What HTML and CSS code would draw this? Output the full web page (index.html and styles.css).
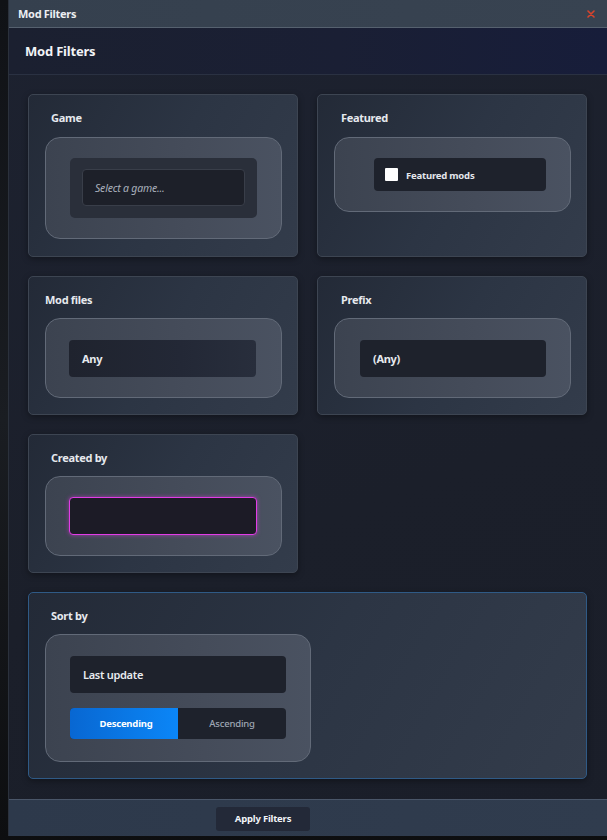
FILE: index.html
```html
<!DOCTYPE html>
<html>
<head>
<meta charset="utf-8">
<link rel="stylesheet" href="styles.css">
</head>
<body>
<div class="window">
  <div class="titlebar">
    <span class="title">Mod Filters</span>
    <svg class="close" width="8" height="8" viewBox="0 0 8 8"><path d="M1 1L7 7M7 1L1 7" stroke="#d8432c" stroke-width="1.6" stroke-linecap="round"/></svg>
  </div>
  <div class="header">Mod Filters</div>
  <div class="content">
    <div class="card card-top">
      <div class="label">Game</div>
      <div class="panel panel-game">
        <div class="wrap">
          <div class="input placeholder">Select a game...</div>
        </div>
      </div>
    </div>
    <div class="card card-top">
      <div class="label label-right">Featured</div>
      <div class="panel panel-featured">
        <div class="check-row">
          <span class="checkbox"></span>
          <span class="check-text">Featured mods</span>
        </div>
      </div>
    </div>
    <div class="card">
      <div class="label label-flush">Mod files</div>
      <div class="panel panel-select">
        <div class="select select-grad">Any</div>
      </div>
    </div>
    <div class="card">
      <div class="label label-right">Prefix</div>
      <div class="panel panel-prefix">
        <div class="select">(Any)</div>
      </div>
    </div>
    <div class="card">
      <div class="label">Created by</div>
      <div class="panel panel-created">
        <div class="text-input"></div>
      </div>
    </div>
    <div class="empty"></div>
    <div class="card card-sort">
      <div class="label">Sort by</div>
      <div class="panel panel-sort">
        <div class="select">Last update</div>
        <div class="toggle">
          <span class="toggle-btn active">Descending</span>
          <span class="toggle-btn">Ascending</span>
        </div>
      </div>
    </div>
  </div>
  <div class="footer">
    <button class="apply">Apply Filters</button>
  </div>
</div>
</body>
</html>
```
FILE: styles.css
```css
* { box-sizing: border-box; }
html, body { margin: 0; padding: 0; }
body {
  width: 607px;
  height: 840px;
  overflow: hidden;
  background: linear-gradient(180deg, #101216 0%, #1a1d22 50%, #0d0e10 100%);
  font-family: "Noto Sans", "Open Sans", sans-serif;
  padding-left: 8px;
}
.window {
  width: 599px;
  height: 836px;
  display: flex;
  flex-direction: column;
  border-left: 1px solid #2b313c;
  background: linear-gradient(160deg, #1d2230 0%, #1b1f2a 60%, #1a1e29 100%);
}
.titlebar {
  height: 28px;
  flex: none;
  display: flex;
  align-items: center;
  justify-content: space-between;
  padding: 0 12px 0 9px;
  background: linear-gradient(90deg, #35404e, #384351);
  border-bottom: 1px solid #56616f;
}
.title {
  color: #eceef2;
  font-size: 11px;
  font-weight: 700;
  letter-spacing: -0.3px;
}
.close { display: block; }
.header {
  height: 47px;
  flex: none;
  display: flex;
  align-items: center;
  padding-left: 16px;
  color: #f2f4f7;
  font-size: 13px;
  font-weight: 700;
  letter-spacing: -0.2px;
  background: linear-gradient(90deg, #1b2030 0%, #1a1f34 55%, #171d3a 100%);
  border-bottom: 1px solid #2a3142;
}
.content {
  flex: 1;
  display: grid;
  grid-template-columns: 270px 270px;
  column-gap: 19px;
  row-gap: 19px;
  align-content: start;
  padding: 19px 20px 0 19px;
}
.card {
  border: 1px solid #3d4552;
  border-radius: 5px;
  background: linear-gradient(120deg, #232a37 0%, #2c3544 50%, #333c4b 100%);
  padding: 16px 15px 16px 16px;
  box-shadow: 0 2px 6px rgba(0,0,0,0.35);
}
.card-top { padding-bottom: 17px; }
.card-sort {
  grid-column: 1 / 3;
  border-color: #2f5a86;
}
.label {
  color: #e6e9ee;
  font-size: 11px;
  line-height: 14px;
  font-weight: 700;
  letter-spacing: -0.3px;
  padding-left: 6px;
  margin-bottom: 11px;
}
.card-top .label { margin-bottom: 12px; }
.label-flush { padding-left: 0; }
.label-right { padding-left: 7px; }
.panel {
  border: 1px solid #626a78;
  border-radius: 15px;
  background: linear-gradient(90deg, #3c4350 0%, #454c5a 60%, #4a5261 100%);
}
.panel-game { padding: 20px 24px; }
.wrap {
  background: #2a2f3a;
  border-radius: 5px;
  padding: 11px 12px 12px 12px;
}
.input {
  height: 37px;
  border: 1px solid #393e49;
  border-radius: 4px;
  background: #1d2029;
  display: flex;
  align-items: center;
  padding-left: 12px;
  font-size: 10.5px;
}
.placeholder {
  color: #a9b0bc;
  font-style: italic;
  letter-spacing: -0.2px;
}
.panel-featured { padding: 20px 24px 20px 39px; }
.check-row {
  height: 33px;
  background: #1e222c;
  border-radius: 4px;
  display: flex;
  align-items: center;
  padding-left: 11px;
  gap: 8px;
}
.checkbox {
  width: 13px;
  height: 13px;
  background: #ffffff;
  border-radius: 1px;
}
.check-text {
  color: #e4e7ec;
  font-size: 9.5px;
  font-weight: 700;
  letter-spacing: -0.2px;
  padding-top: 1px;
}
.panel-select { padding: 21px 25px 20px 23px; }
.panel-prefix { padding: 21px 24px 20px 25px; }
.select {
  height: 37px;
  border-radius: 4px;
  background: #1e222c;
  display: flex;
  align-items: center;
  padding-left: 13px;
  color: #e8ebef;
  font-size: 11px;
  font-weight: 700;
  letter-spacing: -0.3px;
}
.select-grad {
  background: linear-gradient(90deg, #1f232e 0%, #232836 60%, #282e3c 100%);
}
.panel-created { padding: 20px 24px 20px 23px; }
.text-input {
  height: 38px;
  border: 1px solid #e23ce6;
  border-radius: 4px;
  background: #1c1b26;
  box-shadow: 0 0 4px rgba(226, 60, 230, 0.55);
}
.panel-sort {
  width: 266px;
  padding: 21px 24px 22px 24px;
}
.panel-sort .select { padding-left: 13px; font-weight: 600; }
.toggle {
  margin-top: 15px;
  height: 31px;
  display: flex;
  border-radius: 4px;
  overflow: hidden;
  background: #1e222c;
}
.toggle-btn {
  flex: none;
  width: 50%;
  display: flex;
  align-items: center;
  justify-content: center;
  color: #9ea6b3;
  font-size: 9.5px;
  font-weight: 500;
  letter-spacing: -0.2px;
}
.toggle-btn.active {
  background: linear-gradient(90deg, #0867d2 0%, #0a7ae8 60%, #0b86f7 100%);
  color: #ffffff;
  font-weight: 700;
  padding-left: 4px;
}
.footer {
  height: 37px;
  flex: none;
  border-top: 1px solid #4a5669;
  background: linear-gradient(90deg, #2d394b, #303c4e);
  padding: 5px 0 7px 207px;
}
.apply {
  width: 94px;
  height: 24px;
  border: none;
  border-radius: 3px;
  background: #232938;
  color: #f2f4f8;
  font-family: "Noto Sans", "Open Sans", sans-serif;
  font-size: 9.5px;
  font-weight: 700;
  letter-spacing: -0.2px;
  padding: 0 0 1px 0;
}
```
